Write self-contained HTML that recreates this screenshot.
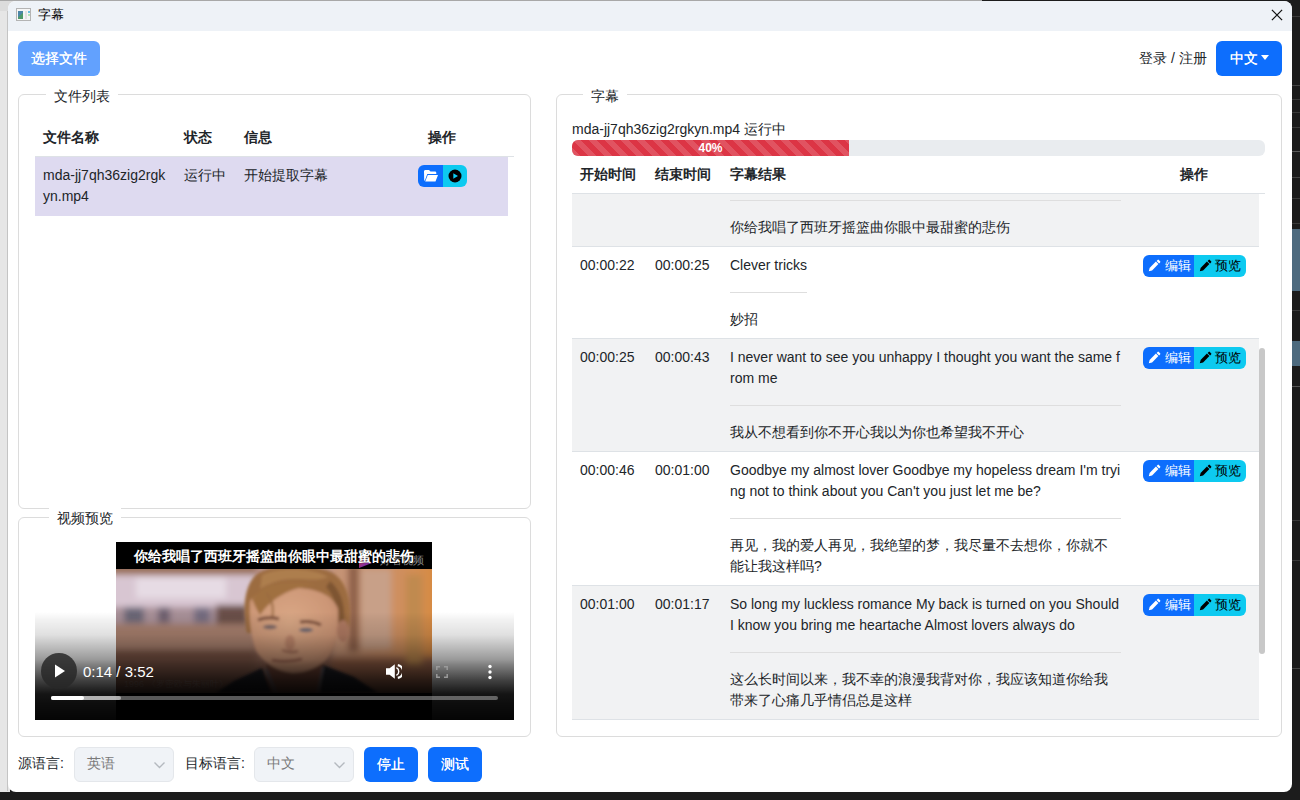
<!DOCTYPE html>
<html><head><meta charset="utf-8">
<style>
*{box-sizing:border-box;margin:0;padding:0}
html,body{width:1300px;height:800px;overflow:hidden}
body{position:relative;background:#1c1c1c;font-family:"Liberation Sans",sans-serif;font-size:14px;color:#212529;line-height:21px}
.a{position:absolute}
#lstrip{left:0;top:0;width:10px;height:792px;background:#e6e6e6}
#win{left:8px;top:1px;width:1284px;height:791px;background:#fff;border-radius:8px;overflow:hidden}
#title{left:8px;top:1px;width:1284px;height:30px;background:#eef2f7;border-radius:8px 8px 0 0}
.fs{position:absolute;border:1px solid #dcdcdc;border-radius:6px}
.lg{position:absolute;top:-11px;background:#fff;padding:0 8px;line-height:21px}
.btn{position:absolute;color:#fff;border-radius:6px;text-align:center;line-height:35px;height:35px;text-shadow:0.35px 0 0 #fff}
.b{font-weight:bold}
.c{position:absolute;white-space:nowrap}
.row{position:absolute;left:572px;width:687px;border-bottom:1px solid #dee2e6}
.g{background:#f1f2f3}
.hr{position:absolute;left:158px;height:1px;background:#dedede}
.bgp{position:absolute;left:571px;width:103px;height:22px;border-radius:6px;overflow:hidden;font-size:13px;line-height:22px}
.bgp .e{position:absolute;left:0;top:0;width:51px;height:22px;background:#0d6efd;color:#fff}
.bgp .p{position:absolute;left:51px;top:0;width:52px;height:22px;background:#0dcaf0;color:#000}
</style></head><body>
<div id="lstrip" class="a"></div>
<div class="a" style="left:0;top:0;width:982px;height:10px;background:#dcdcdc"></div>
<div class="a" style="left:0;top:0;width:982px;height:1px;background:#a8a8a8"></div>
<div class="a" style="left:0;top:1px;width:8px;height:10px;background:#dcdcdc"></div>
<div class="a" style="left:7px;top:11px;width:1px;height:780px;background:#c4c4c4"></div>
<div class="a" style="left:1292px;top:16px;width:8px;height:1px;background:#3a3a3a"></div>
<div class="a" style="left:1292px;top:85px;width:8px;height:1px;background:#444"></div>
<div class="a" style="left:1292px;top:99px;width:8px;height:1px;background:#3a3a3a"></div>
<div class="a" style="left:1292px;top:112px;width:8px;height:1px;background:#3a3a3a"></div>
<div class="a" style="left:1292px;top:127px;width:8px;height:1px;background:#3a3a3a"></div>
<div class="a" style="left:1292px;top:151px;width:8px;height:1px;background:#5a5a5a"></div>
<div class="a" style="left:1292px;top:177px;width:8px;height:1px;background:#444"></div>
<div class="a" style="left:1292px;top:198px;width:8px;height:1px;background:#3a3a3a"></div>
<div class="a" style="left:1292px;top:223px;width:8px;height:1px;background:#3a3a3a"></div>
<div class="a" style="left:1292px;top:310px;width:8px;height:1px;background:#3a3a3a"></div>
<div class="a" style="left:1292px;top:386px;width:8px;height:1px;background:#555"></div>
<div class="a" style="left:1292px;top:520px;width:8px;height:1px;background:#3a3a3a"></div>
<div class="a" style="left:1292px;top:560px;width:8px;height:1px;background:#3a3a3a"></div>
<div class="a" style="left:1292px;top:668px;width:8px;height:1px;background:#444"></div>
<div class="a" style="left:1292px;top:229px;width:8px;height:62px;background:#4d6a7e"></div>
<div class="a" style="left:1292px;top:341px;width:8px;height:25px;background:#4d6a7e"></div>
<div id="win" class="a"></div>
<div id="title" class="a"></div>
<!-- title bar -->
<div class="a" style="left:16px;top:8px;width:15px;height:13px;border:1px solid #b4b4b4;background:#f6f6f6"></div>
<div class="a" style="left:18px;top:11px;width:5px;height:8px;background:linear-gradient(135deg,#4b86a8 0%,#4b86a8 45%,#4f9a6a 55%,#4f9a6a 100%)"></div>
<div class="a" style="left:25px;top:11px;width:2px;height:8px;background:#e2e2e2"></div>
<div class="a" style="left:28px;top:11px;width:2px;height:2px;background:#6cc0e0"></div>
<div class="a" style="left:28px;top:14px;width:2px;height:2px;border-radius:1px;background:#9ee0a8"></div>
<div class="c" style="left:38px;top:5px;font-size:13px;line-height:20px;color:#000">字幕</div>
<svg class="a" style="left:1271px;top:9px" width="12" height="12" viewBox="0 0 12 12"><path d="M0.9 0.9L11.1 11.1M11.1 0.9L0.9 11.1" stroke="#111" stroke-width="1.25"/></svg>

<!-- top controls -->
<div class="btn" style="left:18px;top:41px;width:82px;background:#62a1fe">选择文件</div>
<div class="c" style="left:1139px;top:48px">登录 / 注册</div>
<div class="btn" style="left:1216px;top:41px;width:66px;background:#0d6efd;text-align:left;padding-left:14px">中文<span class="a" style="left:45px;top:14px;width:0;height:0;border-left:4.5px solid transparent;border-right:4.5px solid transparent;border-top:5px solid #fff"></span></div>

<!-- fieldset 1 -->
<div class="fs" style="left:18px;top:94px;width:513px;height:415px"><div class="lg" style="left:27px;top:-9px">文件列表</div></div>
<div class="c b" style="left:43px;top:127px">文件名称</div>
<div class="c b" style="left:184px;top:127px">状态</div>
<div class="c b" style="left:244px;top:127px">信息</div>
<div class="c b" style="left:428px;top:127px">操作</div>
<div class="a" style="left:35px;top:156px;width:479px;height:1px;background:#dee2e6"></div>
<div class="a" style="left:35px;top:157px;width:473px;height:59px;background:#dedaf0"></div>
<div class="c" style="left:43px;top:165px">mda-jj7qh36zig2rgk<br>yn.mp4</div>
<div class="c" style="left:184px;top:165px">运行中</div>
<div class="c" style="left:244px;top:165px">开始提取字幕</div>
<div class="a" style="left:418px;top:165px;width:49px;height:22px;border-radius:6px;overflow:hidden">
  <div class="a" style="left:0;top:0;width:25px;height:22px;background:#0d6efd"></div>
  <div class="a" style="left:25px;top:0;width:24px;height:22px;background:#0dcaf0"></div>
  <svg class="a" style="left:5px;top:4px" width="16" height="14" viewBox="0 0 16 14"><path d="M1 2.5C1 1.7 1.6 1 2.4 1H6l1.5 1.6H12c.8 0 1.3.6 1.3 1.3V5H4.3L1.9 11.5H1.2z" fill="#fff"/><path d="M4.8 6H15L12.5 12.5H2.2z" fill="#fff"/></svg>
  <svg class="a" style="left:30px;top:4px" width="14" height="14" viewBox="0 0 14 14"><circle cx="7" cy="7" r="6.5" fill="#000"/><path d="M5.3 4.2L10 7L5.3 9.8z" fill="#0dcaf0"/></svg>
</div>

<!-- fieldset 2 -->
<div class="fs" style="left:18px;top:517px;width:513px;height:220px"><div class="lg" style="left:30px;top:-13px;padding-top:3px">视频预览</div></div>
<div id="video" class="a" style="left:35px;top:542px;width:479px;height:178px;overflow:hidden">
  <div class="a" style="left:81px;top:0;width:316px;height:178px;background:#000;overflow:hidden">
    <svg class="a" id="photo" style="left:0;top:27px" width="316" height="124" viewBox="0 0 316 124">
      <defs>
        <filter id="b1" x="-20%" y="-20%" width="140%" height="140%"><feGaussianBlur stdDeviation="1.6"/></filter>
        <filter id="b3" x="-20%" y="-20%" width="140%" height="140%"><feGaussianBlur stdDeviation="3"/></filter>
        <filter id="b5" x="-20%" y="-20%" width="140%" height="140%"><feGaussianBlur stdDeviation="5"/></filter>
        <radialGradient id="face" cx=".45" cy=".4" r=".75"><stop offset="0" stop-color="#daa886"/><stop offset=".65" stop-color="#cc9676"/><stop offset="1" stop-color="#b07a60"/></radialGradient>
        <linearGradient id="rg" x1="0" y1="0" x2="1" y2="0"><stop offset="0" stop-color="#c49478"/><stop offset=".5" stop-color="#cc9068"/><stop offset=".85" stop-color="#d48c4c"/><stop offset="1" stop-color="#d88a3a"/></linearGradient>
        <linearGradient id="bgv" x1="0" y1="0" x2="0" y2="1"><stop offset="0" stop-color="#b89088"/><stop offset=".45" stop-color="#a87e70"/><stop offset=".75" stop-color="#8a6050"/><stop offset="1" stop-color="#6a4a40"/></linearGradient>
      </defs>
      <rect width="316" height="124" fill="url(#bgv)"/>
      <g filter="url(#b3)">
        <rect x="-10" y="-5" width="150" height="11" fill="#9a7058"/>
        <rect x="-10" y="6" width="150" height="32" fill="#d8c6d2"/>
        <rect x="20" y="9" width="90" height="20" fill="#e6dbe4"/>
        <rect x="-10" y="38" width="150" height="17" fill="#a89098"/>
        <rect x="8" y="38" width="20" height="16" fill="#6a6676"/>
        <rect x="42" y="38" width="12" height="16" fill="#6e6070"/>
        <rect x="78" y="38" width="16" height="16" fill="#756c80"/>
        <rect x="100" y="36" width="32" height="20" fill="#6a5048"/>
        <rect x="-10" y="55" width="150" height="26" fill="#a8806e"/>
        <rect x="-10" y="81" width="150" height="50" fill="#7e5646"/>
        <rect x="215" y="-10" width="110" height="105" fill="url(#rg)"/>
        <rect x="215" y="88" width="110" height="45" fill="#9a6448"/>
        <rect x="232" y="-5" width="11" height="88" fill="#8e6048"/>
        <rect x="290" y="6" width="16" height="90" fill="#c08a50"/>
        <rect x="245" y="0" width="30" height="80" fill="#c8a088"/>
      </g>
      <g filter="url(#b1)">
        <path d="M150 90L208 86L206 124L152 124Z" fill="#6a4032"/>
        <path d="M131 64C126 40 128 16 141 5C154 -5 192 -6 213 2C231 10 237 32 233 60L222 66C220 46 214 32 198 26C180 22 156 24 142 34C138 44 137 54 136 64Z" fill="#9c6c40"/>
        <path d="M146 6C162 -2 196 -2 212 8C204 12 192 10 178 10C164 10 154 14 144 20Z" fill="#ad7e4e"/>
        <path d="M214 12C226 22 230 40 228 58L222 60C222 40 218 26 210 18Z" fill="#7e5432"/>
        <path d="M134 32C140 22 158 18 182 19C204 20 218 28 222 40C223 60 222 72 214 86C206 98 190 104 176 104C160 102 148 94 140 82C134 66 133 46 134 32Z" fill="url(#face)"/>
        <path d="M136 30C148 14 172 10 200 16C178 18 158 26 144 46C140 40 138 34 136 30Z" fill="#a07040"/>
        <path d="M150 24C156 30 158 40 156 50" stroke="#9a6c42" stroke-width="2" fill="none"/>
        <ellipse cx="227" cy="62" rx="6" ry="11" fill="#b07a62"/>
        <path d="M142 51Q152 47 163 50M184 53Q195 51 205 56" stroke="#7a4e3a" stroke-width="3" fill="none"/>
        <ellipse cx="154" cy="58" rx="7" ry="2.2" fill="#7a6868"/>
        <ellipse cx="190" cy="61" rx="7" ry="2.2" fill="#6e6a74"/>
        <ellipse cx="174" cy="74" rx="5" ry="8" fill="#b88066" opacity=".8"/>
        <path d="M166 81Q174 85 182 82" stroke="#a06a54" stroke-width="2.5" fill="none"/>
        <path d="M156 91Q170 94 186 90" stroke="#945a4a" stroke-width="2.6" fill="none"/>
        <path d="M100 124L118 112L146 99L156 124Z" fill="#1c1a22"/>
        <path d="M204 124L207 96L238 108L262 124Z" fill="#1c1a22"/>
        <path d="M150 100L160 124M207 98L202 124" stroke="#5a5860" stroke-width="2" fill="none"/>
      </g>
    </svg>
    <div class="c" style="left:8px;top:136px;font-size:9px;line-height:12px;color:rgba(160,150,150,.4)">1996 《罗密欧与朱丽叶》</div>
    <div class="a" style="left:243px;top:15px;width:13px;height:11px;background:linear-gradient(135deg,#c03a30 0%,#8a30a0 55%,#6a2aa0 100%);clip-path:polygon(0 0,100% 55%,0 100%)"></div>
    <div class="c" style="left:264px;top:11px;font-size:11px;line-height:14px;color:rgba(200,200,200,.7)">好看视频</div>
    <div class="c b" style="left:0;width:316px;top:4px;text-align:center;color:#fff;font-size:14px;line-height:20px;text-shadow:0 0 1px #000">你给我唱了西班牙摇篮曲你眼中最甜蜜的悲伤</div>
  </div>
  <div class="a" style="left:0;top:70px;width:479px;height:108px;background:linear-gradient(to bottom,rgba(0,0,0,0) 0%,rgba(0,0,0,.05) 7%,rgba(0,0,0,.12) 21%,rgba(0,0,0,.29) 35%,rgba(0,0,0,.4) 44%,rgba(0,0,0,.5) 49%,rgba(0,0,0,.74) 63%,rgba(0,0,0,.84) 70%,rgba(0,0,0,.92) 76%,rgba(0,0,0,.95) 85%,rgba(0,0,0,.98) 100%)"></div>
  <div class="a" style="left:6px;top:111px;width:36px;height:36px;border-radius:50%;background:rgba(40,40,40,.85)"></div>
  <svg class="a" style="left:19px;top:121px" width="12" height="16" viewBox="0 0 12 16"><path d="M1 1.5L11 8L1 14.5z" fill="#fff"/></svg>
  <div class="c" style="left:48px;top:120px;color:#fff;font-size:15px;line-height:20px">0:14 / 3:52</div>
  <svg class="a" style="left:351px;top:122px" width="16" height="15" viewBox="0 0 16 15"><path d="M0 4.3H3.6L8.8 0.3V14.7L3.6 10.7H0Z" fill="#fff"/><path d="M10.4 3.6A4.4 4.4 0 0 1 10.4 11.4" stroke="#fff" stroke-width="1.4" fill="none"/><path d="M11.8 1.1A6.5 6.5 0 0 1 11.8 13.9" stroke="#fff" stroke-width="2.2" fill="none"/></svg>
  <svg class="a" style="left:401px;top:124px" width="12" height="12" viewBox="0 0 12 12"><path d="M0.8 4V0.8H4M8 0.8H11.2V4M11.2 8V11.2H8M4 11.2H0.8V8" stroke="#9a9a9a" stroke-width="1.5" fill="none"/></svg>
  <svg class="a" style="left:452px;top:122px" width="6" height="16" viewBox="0 0 6 16"><circle cx="3" cy="2.5" r="1.7" fill="#fff"/><circle cx="3" cy="8" r="1.7" fill="#fff"/><circle cx="3" cy="13.5" r="1.7" fill="#fff"/></svg>
  <div class="a" style="left:16px;top:154px;width:447px;height:4px;border-radius:2px;background:rgba(255,255,255,.35)"></div>
  <div class="a" style="left:16px;top:154px;width:70px;height:4px;border-radius:2px;background:rgba(255,255,255,.5)"></div>
  <div class="a" style="left:16px;top:154px;width:33px;height:4px;border-radius:2px;background:#fff"></div>
</div>

<!-- bottom controls -->
<div class="c" style="left:18px;top:753px">源语言:</div>
<div class="a" style="left:74px;top:747px;width:100px;height:35px;border:1px solid #e4e7eb;border-radius:6px;background:#f0f3f7"></div>
<div class="c" style="left:87px;top:753px;color:#7a7a7a">英语</div>
<svg class="a" style="left:153px;top:761px" width="13" height="8" viewBox="0 0 13 8"><path d="M1.5 1.5l5 5 5-5" stroke="#b4b9bf" stroke-width="1.4" fill="none"/></svg>
<div class="c" style="left:185px;top:753px">目标语言:</div>
<div class="a" style="left:254px;top:747px;width:100px;height:35px;border:1px solid #e4e7eb;border-radius:6px;background:#f0f3f7"></div>
<div class="c" style="left:267px;top:753px;color:#7a7a7a">中文</div>
<svg class="a" style="left:333px;top:761px" width="13" height="8" viewBox="0 0 13 8"><path d="M1.5 1.5l5 5 5-5" stroke="#b4b9bf" stroke-width="1.4" fill="none"/></svg>
<div class="btn" style="left:364px;top:747px;width:54px;background:#0d6efd">停止</div>
<div class="btn" style="left:428px;top:747px;width:54px;background:#0d6efd">测试</div>

<!-- fieldset 3 -->
<div class="fs" style="left:556px;top:94px;width:726px;height:643px"><div class="lg" style="left:26px;top:-9px">字幕</div></div>
<div class="c" style="left:572px;top:119px">mda-jj7qh36zig2rgkyn.mp4 运行中</div>
<div class="a" style="left:572px;top:140px;width:693px;height:16px;border-radius:6px;background:#e9ecef;overflow:hidden">
  <div class="a" style="left:0;top:0;width:277px;height:16px;background-color:#dc3545;background-image:linear-gradient(45deg,rgba(255,255,255,.15) 25%,transparent 25%,transparent 50%,rgba(255,255,255,.15) 50%,rgba(255,255,255,.15) 75%,transparent 75%,transparent);background-size:16px 16px;color:#fff;font-size:12px;line-height:16px;text-align:center;font-weight:bold">40%</div>
</div>
<div class="c b" style="left:580px;top:164px">开始时间</div>
<div class="c b" style="left:655px;top:164px">结束时间</div>
<div class="c b" style="left:730px;top:164px">字幕结果</div>
<div class="c b" style="left:1180px;top:164px">操作</div>
<div class="a" style="left:572px;top:193px;width:693px;height:1px;background:#dee2e6"></div>

<div id="tbody" class="a" style="left:0;top:0;width:1300px;height:720px;clip-path:inset(194px 0 0 0)">
  <!-- row1 partial -->
  <div class="row g" style="top:160px;height:87px">
    <div class="hr" style="top:40px;width:391px"></div>
    <div class="c" style="left:158px;top:57px">你给我唱了西班牙摇篮曲你眼中最甜蜜的悲伤</div>
  </div>
  <div class="row" style="top:247px;height:92px">
    <div class="c" style="left:8px;top:8px">00:00:22</div>
    <div class="c" style="left:83px;top:8px">00:00:25</div>
    <div class="bgp" style="top:8px"><div class="e"><svg class="a" style="left:5px;top:4px" width="13" height="13" viewBox="0 0 13 13"><path d="M0.8 12.2L1.6 8.9L7.9 2.6L10.4 5.1L4.1 11.4Z" fill="#fff"/><path d="M8.6 1.9L9.6 0.9Q10.2 0.3 10.8 0.9L12.1 2.2Q12.7 2.8 12.1 3.4L11.1 4.4Z" fill="#fff"/></svg><span class="a" style="left:22px;top:0">编辑</span></div><div class="p"><svg class="a" style="left:5px;top:4px" width="13" height="13" viewBox="0 0 13 13"><path d="M0.8 12.2L1.6 8.9L7.9 2.6L10.4 5.1L4.1 11.4Z" fill="#000"/><path d="M8.6 1.9L9.6 0.9Q10.2 0.3 10.8 0.9L12.1 2.2Q12.7 2.8 12.1 3.4L11.1 4.4Z" fill="#000"/></svg><span class="a" style="left:21px;top:0">预览</span></div></div>
    <div class="c" style="left:158px;top:8px">Clever tricks</div>
    <div class="hr" style="top:45px;width:77px"></div>
    <div class="c" style="left:158px;top:62px">妙招</div>
  </div>
  <div class="row g" style="top:339px;height:113px">
    <div class="c" style="left:8px;top:8px">00:00:25</div>
    <div class="c" style="left:83px;top:8px">00:00:43</div>
    <div class="bgp" style="top:8px"><div class="e"><svg class="a" style="left:5px;top:4px" width="13" height="13" viewBox="0 0 13 13"><path d="M0.8 12.2L1.6 8.9L7.9 2.6L10.4 5.1L4.1 11.4Z" fill="#fff"/><path d="M8.6 1.9L9.6 0.9Q10.2 0.3 10.8 0.9L12.1 2.2Q12.7 2.8 12.1 3.4L11.1 4.4Z" fill="#fff"/></svg><span class="a" style="left:22px;top:0">编辑</span></div><div class="p"><svg class="a" style="left:5px;top:4px" width="13" height="13" viewBox="0 0 13 13"><path d="M0.8 12.2L1.6 8.9L7.9 2.6L10.4 5.1L4.1 11.4Z" fill="#000"/><path d="M8.6 1.9L9.6 0.9Q10.2 0.3 10.8 0.9L12.1 2.2Q12.7 2.8 12.1 3.4L11.1 4.4Z" fill="#000"/></svg><span class="a" style="left:21px;top:0">预览</span></div></div>
    <div class="c" style="left:158px;top:8px">I never want to see you unhappy I thought you want the same f<br>rom me</div>
    <div class="hr" style="top:66px;width:391px"></div>
    <div class="c" style="left:158px;top:83px">我从不想看到你不开心我以为你也希望我不开心</div>
  </div>
  <div class="row" style="top:452px;height:134px">
    <div class="c" style="left:8px;top:8px">00:00:46</div>
    <div class="c" style="left:83px;top:8px">00:01:00</div>
    <div class="bgp" style="top:8px"><div class="e"><svg class="a" style="left:5px;top:4px" width="13" height="13" viewBox="0 0 13 13"><path d="M0.8 12.2L1.6 8.9L7.9 2.6L10.4 5.1L4.1 11.4Z" fill="#fff"/><path d="M8.6 1.9L9.6 0.9Q10.2 0.3 10.8 0.9L12.1 2.2Q12.7 2.8 12.1 3.4L11.1 4.4Z" fill="#fff"/></svg><span class="a" style="left:22px;top:0">编辑</span></div><div class="p"><svg class="a" style="left:5px;top:4px" width="13" height="13" viewBox="0 0 13 13"><path d="M0.8 12.2L1.6 8.9L7.9 2.6L10.4 5.1L4.1 11.4Z" fill="#000"/><path d="M8.6 1.9L9.6 0.9Q10.2 0.3 10.8 0.9L12.1 2.2Q12.7 2.8 12.1 3.4L11.1 4.4Z" fill="#000"/></svg><span class="a" style="left:21px;top:0">预览</span></div></div>
    <div class="c" style="left:158px;top:8px">Goodbye my almost lover Goodbye my hopeless dream I'm tryi<br>ng not to think about you Can't you just let me be?</div>
    <div class="hr" style="top:66px;width:391px"></div>
    <div class="c" style="left:158px;top:83px">再见，我的爱人再见，我绝望的梦，我尽量不去想你，你就不<br>能让我这样吗?</div>
  </div>
  <div class="row g" style="top:586px;height:134px">
    <div class="c" style="left:8px;top:8px">00:01:00</div>
    <div class="c" style="left:83px;top:8px">00:01:17</div>
    <div class="bgp" style="top:8px"><div class="e"><svg class="a" style="left:5px;top:4px" width="13" height="13" viewBox="0 0 13 13"><path d="M0.8 12.2L1.6 8.9L7.9 2.6L10.4 5.1L4.1 11.4Z" fill="#fff"/><path d="M8.6 1.9L9.6 0.9Q10.2 0.3 10.8 0.9L12.1 2.2Q12.7 2.8 12.1 3.4L11.1 4.4Z" fill="#fff"/></svg><span class="a" style="left:22px;top:0">编辑</span></div><div class="p"><svg class="a" style="left:5px;top:4px" width="13" height="13" viewBox="0 0 13 13"><path d="M0.8 12.2L1.6 8.9L7.9 2.6L10.4 5.1L4.1 11.4Z" fill="#000"/><path d="M8.6 1.9L9.6 0.9Q10.2 0.3 10.8 0.9L12.1 2.2Q12.7 2.8 12.1 3.4L11.1 4.4Z" fill="#000"/></svg><span class="a" style="left:21px;top:0">预览</span></div></div>
    <div class="c" style="left:158px;top:8px">So long my luckless romance My back is turned on you Should<br>I know you bring me heartache Almost lovers always do</div>
    <div class="hr" style="top:66px;width:391px"></div>
    <div class="c" style="left:158px;top:83px">这么长时间以来，我不幸的浪漫我背对你，我应该知道你给我<br>带来了心痛几乎情侣总是这样</div>
  </div>
</div>
<!-- scrollbar -->
<div class="a" style="left:1259px;top:348px;width:6px;height:306px;border-radius:3px;background:#c8c8c8"></div>
</body></html>
